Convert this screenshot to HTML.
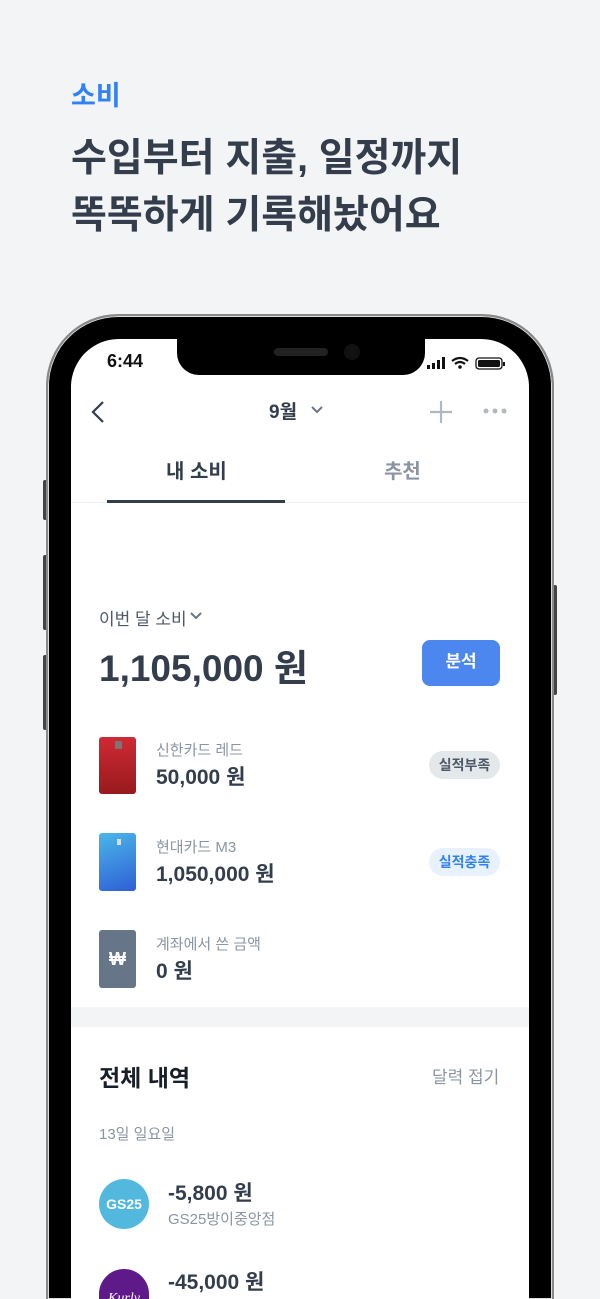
<!DOCTYPE html><html><head><meta charset="utf-8"><style>
*{margin:0;padding:0;box-sizing:border-box}
html{width:600px;height:1299px;overflow:hidden}
body{width:600px;height:1299px;background:#f2f4f6;position:relative;overflow:hidden;font-family:"Liberation Sans","Noto Sans CJK KR",sans-serif;color:#333d4b}
.a{position:absolute}
.t{white-space:nowrap}
</style></head><body>
<div class="a t" style="left:71px;top:74px;font-size:27px;font-weight:700;color:#3182f6">소비</div>
<div class="a t" style="left:71px;top:130px;font-size:39px;font-weight:700;color:#333d4b;line-height:57px">수입부터 지출, 일정까지<br>똑똑하게 기록해놨어요</div>
<div class="a" style="left:43px;top:480px;width:5px;height:40px;background:#444;border-radius:2px"></div>
<div class="a" style="left:43px;top:555px;width:5px;height:75px;background:#444;border-radius:2px"></div>
<div class="a" style="left:43px;top:655px;width:5px;height:75px;background:#444;border-radius:2px"></div>
<div class="a" style="left:552px;top:585px;width:5px;height:110px;background:#444;border-radius:2px"></div>
<div class="a" style="left:46px;top:314px;width:508px;height:985px;border-radius:72px 72px 0 0;background:#000;border:2px solid #8a8a8a;border-bottom:none;box-shadow:inset 0 0 0 1px #ddd"></div>
<div class="a" style="left:71px;top:339px;width:458px;height:960px;border-radius:48px 48px 0 0;background:#fff;overflow:hidden">
 <div class="a t" style="left:36px;top:12px;font-size:18px;font-weight:700;color:#111">6:44</div>
 <div class="a" style="left:106px;top:-2px;width:248px;height:38px;background:#000;border-radius:0 0 22px 22px"></div>
 <div class="a" style="left:203px;top:9px;width:54px;height:8px;background:#222;border-radius:4px"></div>
 <div class="a" style="left:273px;top:5px;width:16px;height:16px;background:#111;border-radius:50%"></div>
 <svg class="a" style="left:356px;top:17px" width="80" height="16" viewBox="0 0 80 16">
  <rect x="0" y="9" width="3" height="4" fill="#111"/><rect x="5" y="7" width="3" height="6" fill="#111"/><rect x="10" y="4" width="3" height="9" fill="#111"/><rect x="15" y="1" width="3" height="12" fill="#111"/>
  <path d="M25 5 Q33 -1 41 5 M28 8 Q33 4 38 8" stroke="#111" stroke-width="2.2" fill="none"/><circle cx="33" cy="11" r="1.8" fill="#111"/>
  <rect x="49" y="2" width="26" height="11" rx="3" fill="none" stroke="#111" stroke-width="1.3"/><rect x="51" y="4" width="22" height="7" rx="1.5" fill="#111"/><rect x="76" y="6" width="2" height="4" fill="#111"/>
 </svg>
 <svg class="a" style="left:19px;top:61px" width="16" height="24"><path d="M13 2 L3 12 L13 22" stroke="#333d4b" stroke-width="2.2" fill="none"/></svg>
 <div class="a t" style="left:198px;top:58px;font-size:19px;font-weight:700;color:#333d4b">9월</div>
 <svg class="a" style="left:239px;top:66px" width="14" height="10"><path d="M2 2 L7 7 L12 2" stroke="#6b7684" stroke-width="2" fill="none"/></svg>
 <svg class="a" style="left:358px;top:61px" width="24" height="24"><path d="M12 1V23M1 12H23" stroke="#b0b8c1" stroke-width="2.2"/></svg>
 <svg class="a" style="left:412px;top:69px" width="24" height="6"><circle cx="3" cy="3" r="2.5" fill="#b0b8c1"/><circle cx="12" cy="3" r="2.5" fill="#b0b8c1"/><circle cx="21" cy="3" r="2.5" fill="#b0b8c1"/></svg>
 <div class="a t" style="left:95px;top:116px;font-size:20px;font-weight:700;color:#333d4b">내 소비</div>
 <div class="a t" style="left:313px;top:116px;font-size:20px;font-weight:700;color:#8b95a1">추천</div>
 <div class="a" style="left:0;top:163px;width:458px;height:1px;background:#eef0f2"></div>
 <div class="a" style="left:36px;top:161px;width:178px;height:3px;background:#333d4b"></div>
 <div class="a t" style="left:28px;top:266px;font-size:17px;color:#4e5968">이번 달 소비</div>
 <svg class="a" style="left:118px;top:272px" width="14" height="10"><path d="M2 2 L7 7 L12 2" stroke="#6b7684" stroke-width="2" fill="none"/></svg>
 <div class="a t" style="left:28px;top:299px;font-size:37px;font-weight:700;color:#333d4b">1,105,000 원</div>
 <div class="a t" style="left:351px;top:301px;width:78px;height:46px;border-radius:8px;background:#4c87f0;color:#fff;font-size:17px;font-weight:700;text-align:center;line-height:44px">분석</div>

 <div class="a" style="left:28px;top:398px;width:37px;height:57px;border-radius:3px;background:linear-gradient(#cf2a35,#971a1c)"><div class="a" style="left:16px;top:4px;width:7px;height:8px;background:#777;border-radius:1px"></div></div>
 <div class="a t" style="left:85px;top:400px;font-size:15px;color:#8b95a1">신한카드 레드</div>
 <div class="a t" style="left:85px;top:422px;font-size:21px;font-weight:700;color:#333d4b">50,000 원</div>
 <div class="a t" style="left:358px;top:412px;width:71px;height:28px;border-radius:14px;background:#e5e8eb;color:#4e5968;font-size:14px;font-weight:700;text-align:center;line-height:28px">실적부족</div>

 <div class="a" style="left:28px;top:494px;width:37px;height:58px;border-radius:3px;background:linear-gradient(160deg,#4ab6e8,#2e5fd6)"><div class="a" style="left:18px;top:6px;width:4px;height:6px;background:#ddd"></div></div>
 <div class="a t" style="left:85px;top:497px;font-size:15px;color:#8b95a1">현대카드 M3</div>
 <div class="a t" style="left:85px;top:519px;font-size:21px;font-weight:700;color:#333d4b">1,050,000 원</div>
 <div class="a t" style="left:358px;top:509px;width:71px;height:28px;border-radius:14px;background:#e8f1fe;color:#3182f6;font-size:14px;font-weight:700;text-align:center;line-height:28px">실적충족</div>

 <div class="a" style="left:28px;top:591px;width:37px;height:58px;border-radius:3px;background:#667587;color:#fff;font-size:18px;font-weight:700;text-align:center;line-height:58px">₩</div>
 <div class="a t" style="left:85px;top:594px;font-size:15px;color:#8b95a1">계좌에서 쓴 금액</div>
 <div class="a t" style="left:85px;top:616px;font-size:21px;font-weight:700;color:#333d4b">0 원</div>

 <div class="a" style="left:0;top:668px;width:458px;height:20px;background:#f2f4f6"></div>
 <div class="a t" style="left:28px;top:720px;font-size:23px;font-weight:700;color:#191f28">전체 내역</div>
 <div class="a t" style="left:361px;top:724px;font-size:17px;color:#8b95a1">달력 접기</div>
 <div class="a t" style="left:28px;top:784px;font-size:15px;color:#8b95a1">13일 일요일</div>
 <div class="a" style="left:28px;top:840px;width:50px;height:50px;border-radius:50%;background:#52b8dd;color:#fff;font-size:14px;font-weight:700;text-align:center;line-height:50px">GS25</div>
 <div class="a t" style="left:97px;top:838px;font-size:21px;font-weight:700;color:#333d4b">-5,800 원</div>
 <div class="a t" style="left:97px;top:869px;font-size:15px;color:#8b95a1">GS25방이중앙점</div>
 <div class="a" style="left:28px;top:930px;width:50px;height:30px;border-radius:25px 25px 0 0;background:#5f1a8a;overflow:hidden;color:#fff;font-size:14px;font-style:italic;text-align:center;line-height:60px;font-family:'Liberation Serif',serif">Kurly</div>
 <div class="a t" style="left:97px;top:927px;font-size:21px;font-weight:700;color:#333d4b">-45,000 원</div>
</div>
</body></html>
